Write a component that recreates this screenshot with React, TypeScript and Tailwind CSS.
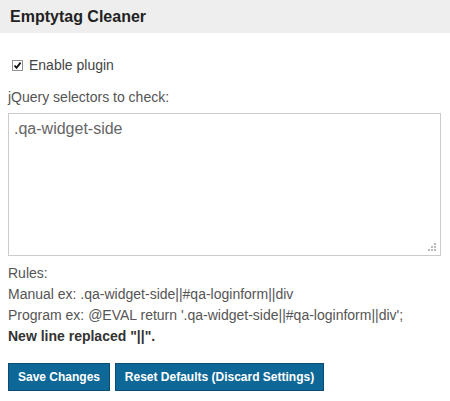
import { useState } from 'react';

// Cuadro de verificación al estilo antiguo
const Casilla = ({ marcada, onToggle }: { marcada: boolean; onToggle: () => void }) => (
  <button
    type="button"
    onClick={onToggle}
    className="w-[11px] h-[11px] border border-[#8f8f8f] bg-white flex items-center justify-center p-0"
  >
    {marcada && (
      <svg width="9" height="9" viewBox="0 0 9 9">
        <path d="M1.5 4.5 L3.5 6.8 L7.6 1.6" stroke="#111" strokeWidth="1.8" fill="none" />
      </svg>
    )}
  </button>
);

// Puntos del asa de redimensionado
const Asa = () => (
  <svg width="9" height="9" viewBox="0 0 9 9" className="absolute right-[4px] bottom-[4px] pointer-events-none">
    <rect x="6" y="0" width="2" height="2" fill="#bbb" />
    <rect x="3" y="3" width="2" height="2" fill="#bbb" />
    <rect x="6" y="3" width="2" height="2" fill="#bbb" />
    <rect x="0" y="6" width="2" height="2" fill="#bbb" />
    <rect x="3" y="6" width="2" height="2" fill="#bbb" />
    <rect x="6" y="6" width="2" height="2" fill="#bbb" />
  </svg>
);

export default function App() {
  const [activo, setActivo] = useState(true);
  const [selectores, setSelectores] = useState('.qa-widget-side');

  return (
    <div className="w-[450px] h-[401px] bg-white font-['Liberation_Sans',Arial,sans-serif] text-[14px] text-[#555]">
      <div className="h-[33px] bg-[#eeeeee] flex items-center px-[10px]">
        <h1 className="text-[16px] font-bold text-[#222]">Emptytag Cleaner</h1>
      </div>

      <div className="px-[8px]">
        <label className="flex items-center gap-[6px] mt-[22px] ml-[4px] text-[#444]">
          <Casilla marcada={activo} onToggle={() => setActivo(!activo)} />
          <span>Enable plugin</span>
        </label>

        <p className="mt-[11px] leading-[20px]">jQuery selectors to check:</p>

        <div className="relative mt-[6px] w-[433px]">
          <textarea
            className="block w-full h-[143px] border border-[#ccc] px-[5px] py-[3px] text-[16px] text-[#666] resize-none outline-none"
            value={selectores}
            onChange={(e) => setSelectores(e.target.value)}
          />
          <Asa />
        </div>

        <div className="mt-[7px] leading-[21px]">
          <p>Rules:</p>
          <p>Manual ex: .qa-widget-side||#qa-loginform||div</p>
          <p>Program ex: @EVAL return '.qa-widget-side||#qa-loginform||div';</p>
          <p className="font-bold text-[#333]">New line replaced "||".</p>
        </div>

        <div className="flex gap-[5px] mt-[16px]">
          <button className="h-[28px] w-[102px] bg-[#0e6897] border border-[#0a4c75] text-white text-[12px] font-bold whitespace-nowrap">
            Save Changes
          </button>
          <button className="h-[28px] w-[209px] bg-[#0e6897] border border-[#0a4c75] text-white text-[12px] font-bold whitespace-nowrap">
            Reset Defaults (Discard Settings)
          </button>
        </div>
      </div>
    </div>
  );
}
